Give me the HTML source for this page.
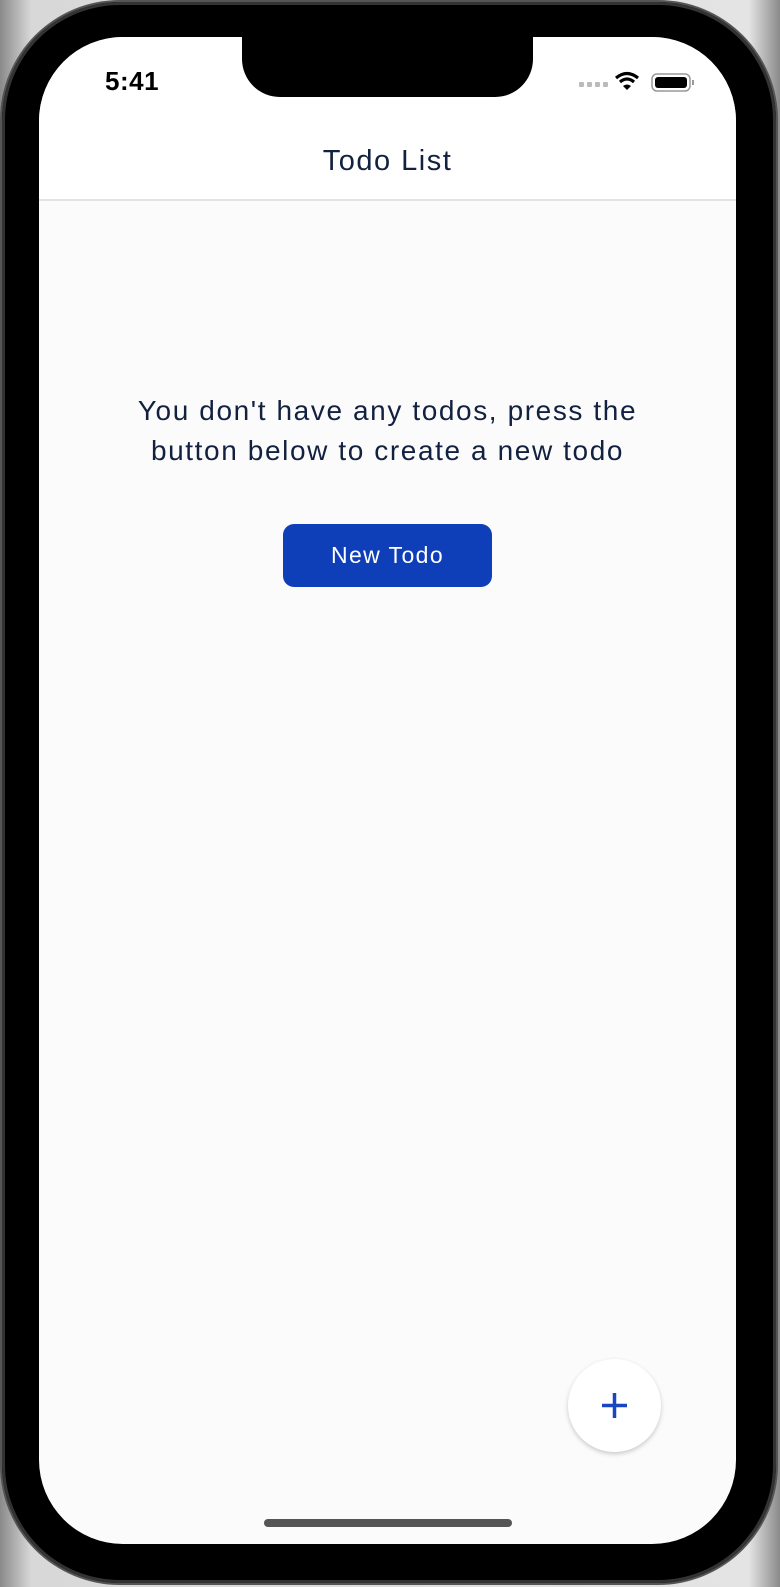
<!DOCTYPE html>
<html><head><style>
html,body{margin:0;padding:0;}
body{width:780px;height:1587px;position:relative;overflow:hidden;background:linear-gradient(90deg,#8a8a8a,#d8d8d8 4%,#e4e4e4 96%,#8a8a8a);font-family:"Liberation Sans",sans-serif;}
.frame{position:absolute;left:2px;top:2px;width:774px;height:1581px;border-radius:118px;background:#000;box-shadow:0 0 0 2px #555,inset 0 0 0 3px #333;}
.screen{position:absolute;left:39px;top:37px;width:697px;height:1507px;border-radius:84px;background:#fbfbfb;overflow:hidden;}
.hdr{position:absolute;left:0;top:0;width:100%;height:162px;background:#fff;border-bottom:2px solid #e3e3e3;}
.notch{position:absolute;left:203px;top:-2px;width:291px;height:62px;background:#000;border-radius:0 0 38px 38px;}
.time{position:absolute;left:66px;top:29px;font-size:26px;font-weight:bold;color:#000;letter-spacing:0.5px;}
.title{position:absolute;left:0;width:100%;top:108px;text-align:center;font-size:29px;color:#12213f;letter-spacing:1.5px;}
.msg{position:absolute;left:0;width:100%;top:354px;text-align:center;font-size:28px;line-height:40px;color:#12213f;letter-spacing:1.6px;}
.btn{position:absolute;left:244px;top:487px;width:209px;height:63px;background:#0f3fb8;border-radius:11px;color:#fff;font-size:23px;text-align:center;line-height:63px;letter-spacing:1.4px;}
.fab{position:absolute;left:529px;top:1322px;width:93px;height:93px;border-radius:50%;background:#fff;box-shadow:0 2px 5px rgba(0,0,0,.2);}
.home{position:absolute;left:225px;top:1482px;width:248px;height:8px;border-radius:4px;background:#555;}
</style></head><body>
<div class="frame"></div>
<div class="screen">
<div class="hdr">
<div class="time">5:41</div>
<div class="notch"></div>
<svg style="position:absolute;left:540px;top:33px" width="120" height="24" viewBox="0 0 120 24">
<g fill="#bbb"><rect x="0" y="12" width="5" height="5" rx="1"/><rect x="8" y="12" width="5" height="5" rx="1"/><rect x="16" y="12" width="5" height="5" rx="1"/><rect x="24" y="12" width="5" height="5" rx="1"/></g>
<path d="M37 8 Q48 -1 59 8" stroke="#000" stroke-width="3.2" fill="none"/>
<path d="M41 12 Q48 6 55 12" stroke="#000" stroke-width="3.2" fill="none"/>
<path d="M44 16 L48 20 L52 16 Q48 13 44 16Z" fill="#000"/>
<rect x="73" y="4" width="38" height="17" rx="5" fill="none" stroke="#999" stroke-width="1.5"/>
<rect x="76" y="7" width="32" height="11" rx="3" fill="#000"/>
<rect x="113" y="10" width="2" height="5" fill="#999"/>
</svg>
<div class="title">Todo List</div>
</div>
<div class="msg">You don't have any todos, press the<br>button below to create a new todo</div>
<div class="btn">New Todo</div>
<div class="fab"><svg width="93" height="93" viewBox="0 0 93 93"><path d="M46.5 34v25M34 46.5h25" stroke="#1a45c0" stroke-width="3.5"/></svg></div>
<div class="home"></div>
</div>
</body></html>
